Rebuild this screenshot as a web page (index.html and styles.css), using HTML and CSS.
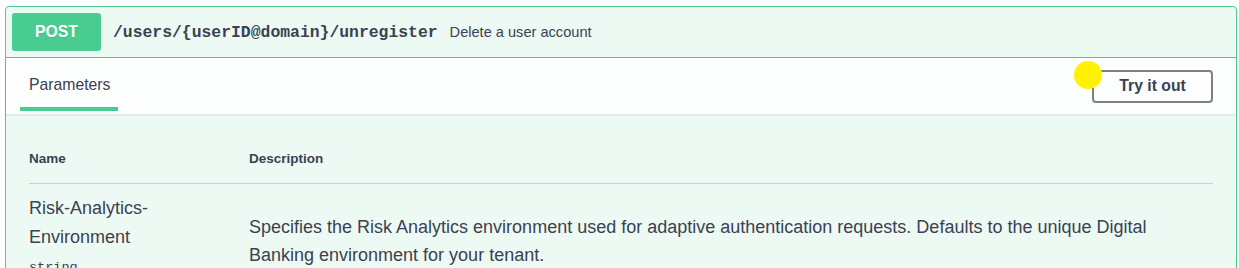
FILE: index.html
```html
<!DOCTYPE html>
<html lang="en">
<head>
    <meta charset="UTF-8">
    <title>Unregister user</title>
    <link rel="stylesheet" href="styles.css">
</head>
<body>
    <div class="opblock">
        <div class="opblock-summary">
            <span class="method">POST</span>
            <span class="path">/users/{userID@domain}/unregister</span>
            <span class="summary">Delete a user account</span>
        </div>

        <div class="section-header">
            <div class="tab">Parameters</div>
            <button class="try-out">Try it out</button>
            <span class="cursor-dot"></span>
        </div>

        <div class="params">
            <table>
                <thead>
                    <tr>
                        <th class="col-name">Name</th>
                        <th>Description</th>
                    </tr>
                </thead>
                <tbody>
                    <tr>
                        <td class="col-name">
                            <div class="param-name">Risk-Analytics-<br>Environment</div>
                            <div class="param-type">string</div>
                        </td>
                        <td class="col-desc">
                            Specifies the Risk Analytics environment used for adaptive authentication requests. Defaults to the unique Digital Banking environment for your tenant.
                        </td>
                    </tr>
                </tbody>
            </table>
        </div>
    </div>
</body>
</html>
```

FILE: styles.css
```css
* {
    margin: 0;
    padding: 0;
    box-sizing: border-box;
}

body {
    font-family: 'Liberation Sans', Arial, sans-serif;
    color: #3b4151;
    background: #ffffff;
    padding: 6px 2px 0 5px;
    height: 268px;
    overflow: hidden;
}

.opblock {
    border: 1px solid #49cc90;
    border-radius: 4px;
    background: #edfaf4;
}

.opblock-summary {
    display: flex;
    align-items: center;
    height: 51px;
    padding: 0 6px;
    border-bottom: 1px solid #49cc90;
}

.method {
    display: flex;
    align-items: center;
    justify-content: center;
    width: 89px;
    height: 38px;
    background: #49cc90;
    color: white;
    border-radius: 3px;
    font-size: 15.75px;
    font-weight: 700;
    text-shadow: 0 1px 0 rgba(0, 0, 0, 0.1);
}

.path {
    margin-left: 12px;
    font-family: 'Liberation Mono', 'DejaVu Sans Mono', monospace;
    font-size: 16.4px;
    font-weight: 700;
}

.summary {
    margin-left: 12px;
    font-size: 14.6px;
}

.section-header {
    position: relative;
    display: flex;
    align-items: center;
    justify-content: space-between;
    height: 56px;
    padding: 0 23px 0 14px;
    background: #fdfefe;
    box-shadow: 0 1px 2px rgba(0, 0, 0, 0.1);
}

.tab {
    align-self: stretch;
    display: flex;
    align-items: center;
    padding: 5px 8px 0 9px;
    font-size: 15.75px;
    border-bottom: 4px solid #49cc90;
    margin-bottom: 3px;
}

.try-out {
    width: 121px;
    height: 33px;
    background: transparent;
    border: 2px solid #808080;
    border-radius: 4px;
    font-family: 'Liberation Sans', Arial, sans-serif;
    font-size: 15.75px;
    font-weight: 700;
    color: #3b4151;
}

.cursor-dot {
    position: absolute;
    left: 1068px;
    top: 3px;
    width: 28px;
    height: 28px;
    border-radius: 50%;
    background: #fff200;
}

.params {
    padding: 29px 23px 0 23px;
}

table {
    width: 100%;
    border-collapse: collapse;
}

th {
    text-align: left;
    font-size: 13.5px;
    line-height: 16px;
    font-weight: 700;
    padding: 8px 0 16px;
    border-bottom: 1px solid #c9d1d1;
}

.col-name {
    width: 220px;
}

td {
    vertical-align: top;
}

td.col-name {
    padding-top: 10px;
}

.param-name {
    font-size: 18px;
    line-height: 29px;
}

.param-type {
    font-family: 'Liberation Mono', monospace;
    font-size: 13.5px;
    line-height: 18px;
    padding-top: 7px;
}

.col-desc {
    padding-top: 29px;
    font-size: 18px;
    line-height: 28px;
}
```
